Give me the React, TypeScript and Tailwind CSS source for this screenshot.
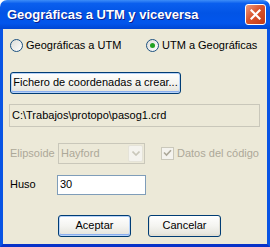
import React from 'react';

const ui = { fontFamily: '"Liberation Sans", Arial, sans-serif' };

const Radio: React.FC<{ checked?: boolean; label: string }> = ({ checked, label }) => (
  <label className="flex items-center h-[13px]">
    <span className="w-[13px] h-[13px] rounded-full border border-[#1C5180] bg-gradient-to-br from-[#DCDCD7] to-white flex items-center justify-center">
      {checked && <span className="w-[5px] h-[5px] rounded-full bg-[#21A121]" />}
    </span>
    <span className="ml-[3px] text-[11px] text-black leading-none">{label}</span>
  </label>
);

const XpButton: React.FC<{ label: string; width: string; isDefault?: boolean }> = ({ label, width, isDefault }) => (
  <button
    className={`${width} h-[22px] rounded-[3px] border border-[#003C74] bg-gradient-to-b from-white via-[#F4F4F0] to-[#E3E2DA] text-[11px] text-black leading-none ${
      isDefault ? 'shadow-[inset_0_0_0_1px_#B8D3F8,inset_0_-1px_0_1px_#8AAEEF]' : 'shadow-[inset_0_-1px_0_1px_#E2E0D6]'
    }`}
  >
    {label}
  </button>
);

export default function App() {
  return (
    <div className="w-[270px] h-[247px] flex flex-col select-none" style={ui}>
      {/* title bar */}
      <div className="h-[29px] rounded-t-[7px] bg-[linear-gradient(to_bottom,#3D8DF8_0%,#0A5FEE_12%,#0254E6_45%,#0256EC_80%,#0046D3_100%)] flex items-center pl-[7px] pr-[4px]">
        <span className="flex-1 text-[13px] font-bold text-white [text-shadow:1px_1px_0_#0F1F8A] leading-none">
          Geográficas a UTM y viceversa
        </span>
        <span className="w-[21px] h-[21px] rounded-[3px] border border-white bg-[linear-gradient(135deg,#EC9C80_0%,#D9542D_45%,#C23A17_100%)] flex items-center justify-center">
          <svg width="11" height="11" viewBox="0 0 11 11">
            <path d="M1.5 1.5L9.5 9.5M9.5 1.5L1.5 9.5" stroke="white" strokeWidth="2.2" strokeLinecap="square" />
          </svg>
        </span>
      </div>

      {/* client area */}
      <div className="flex-1 bg-[#ECE9D8] border-x-[3px] border-b-[3px] border-x-[#0854E4] border-b-[#0832C8] flex flex-col pl-[7px]">
        <div className="mt-[10px] flex">
          <div className="w-[136px]">
            <Radio label="Geográficas a UTM" />
          </div>
          <Radio checked label="UTM a Geográficas" />
        </div>

        <div className="mt-[17px]">
          <XpButton label="Fichero de coordenadas a crear..." width="w-[171px]" isDefault />
        </div>

        <div className="mt-[10px] -ml-px w-[251px] h-[23px] border border-[#C9C7BA] flex items-center pl-[2px] text-[11px] text-black">
          C:\Trabajos\protopo\pasog1.crd
        </div>

        <div className="mt-[16px] h-[21px] flex items-center">
          <span className="w-[48px] text-[11px] text-[#ACA899]">Elipsoide</span>
          <div className="w-[87px] h-[21px] border border-[#C9C7BA] flex items-center pl-[2px]">
            <span className="flex-1 text-[11px] text-[#ACA899]">Hayford</span>
            <span className="w-[15px] h-[17px] mr-px rounded-[2px] bg-[#F4F3EE] border border-[#E5E3D8] flex items-center justify-center">
              <svg width="8" height="5" viewBox="0 0 8 5">
                <path d="M0.5 0.5L4 4L7.5 0.5" fill="none" stroke="#C9C7BA" strokeWidth="1.6" />
              </svg>
            </span>
          </div>
          <span className="ml-[16px] w-[13px] h-[13px] border border-[#CAC8BB] bg-[#F4F3EE] flex items-center justify-center">
            <svg width="9" height="8" viewBox="0 0 9 8">
              <path d="M1 3.5L3.5 6L8 1.2" fill="none" stroke="#ACA899" strokeWidth="1.6" />
            </svg>
          </span>
          <span className="ml-[3px] text-[11px] text-[#ACA899]">Datos del código</span>
        </div>

        <div className="mt-[11px] h-[20px] flex items-center">
          <span className="w-[47px] text-[11px] text-black">Huso</span>
          <div className="w-[89px] h-[20px] border border-[#7F9DB9] bg-white flex items-center pl-[2px] text-[11px] text-black">
            30
          </div>
        </div>

        <div className="mt-[20px] flex pl-[48px] gap-[17px]">
          <XpButton label="Aceptar" width="w-[73px]" isDefault />
          <XpButton label="Cancelar" width="w-[73px]" />
        </div>
      </div>
    </div>
  );
}
